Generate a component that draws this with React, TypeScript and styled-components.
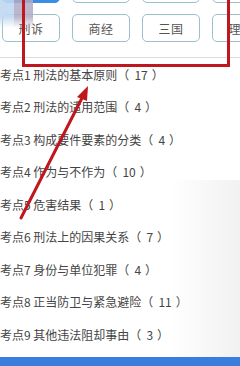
import React from "react";
import styled, { createGlobalStyle } from "styled-components";

const Global = createGlobalStyle`
  html, body { margin: 0; padding: 0; background: #fff; }
  body { font-family: "Noto Sans CJK SC", "Noto Sans", sans-serif; }
`;

const Page = styled.div`
  position: relative;
  width: 240px;
  height: 366px;
  overflow: hidden;
  display: flex;
  flex-direction: column;
  background: #fff;
`;

const TabGrid = styled.div`
  display: grid;
  grid-template-columns: repeat(4, 58px);
  grid-auto-rows: 28px;
  column-gap: 12px;
  row-gap: 11px;
  margin-top: -25px;
  padding-left: 2px;
`;

const Tab = styled.div<{ $active?: boolean }>`
  box-sizing: border-box;
  display: flex;
  align-items: center;
  justify-content: center;
  border-radius: 5px;
  border: 1px solid ${(p) => (p.$active ? "#3a8ee6" : "#9cc0cc")};
  background: ${(p) => (p.$active ? "#3a8ee6" : "#fff")};
  color: ${(p) => (p.$active ? "#fff" : "#555")};
  font-size: 12px;
  letter-spacing: 0.5px;
`;

const Divider = styled.div`
  margin-top: 15px;
  height: 1px;
  background: #dcdcdc;
`;

const List = styled.div`
  display: flex;
  flex-direction: column;
`;

const Item = styled.div`
  height: 32.5px;
  display: flex;
  align-items: center;
  font-size: 12px;
  color: #444;
  white-space: nowrap;
`;

const Num = styled.span`
  padding: 0 4px 0 5px;
`;

const Footer = styled.div`
  margin-top: auto;
  height: 9px;
  background: #3b7ddd;
`;

const TouchGlow = styled.div`
  position: absolute;
  left: 0;
  top: 0;
  width: 33px;
  height: 28px;
  background: linear-gradient(
    90deg,
    rgba(190, 216, 240, 0.9) 0,
    rgba(190, 216, 240, 0.9) 14px,
    rgba(176, 170, 196, 0.85) 14px,
    rgba(176, 170, 196, 0.85) 33px
  );
  -webkit-mask-image: linear-gradient(180deg, #000 60%, transparent 100%);
  mask-image: linear-gradient(180deg, #000 60%, transparent 100%);
`;

const RightShade = styled.div`
  position: absolute;
  right: 0;
  top: 180px;
  width: 70px;
  height: 177px;
  background: linear-gradient(90deg, rgba(235, 235, 235, 0) 0, rgba(232, 232, 232, 0.6) 100%);
  pointer-events: none;
`;

const Annotation = styled.svg`
  position: absolute;
  left: 0;
  top: 0;
  pointer-events: none;
`;

const topTabs = [{ active: true }, {}, {}, {}];
const tabs = ["刑诉", "商经", "三国", "理论"];

const items: [string, number][] = [
  ["考点1 刑法的基本原则", 17],
  ["考点2 刑法的适用范围", 4],
  ["考点3 构成要件要素的分类", 4],
  ["考点4 作为与不作为", 10],
  ["考点5 危害结果", 1],
  ["考点6 刑法上的因果关系", 7],
  ["考点7 身份与单位犯罪", 4],
  ["考点8 正当防卫与紧急避险", 11],
  ["考点9 其他违法阻却事由", 3],
];

export default function App() {
  return (
    <>
      <Global />
      <Page>
        <TabGrid>
          {topTabs.map((t, i) => (
            <Tab key={"t" + i} $active={(t as { active?: boolean }).active} />
          ))}
          {tabs.map((t) => (
            <Tab key={t}>{t}</Tab>
          ))}
        </TabGrid>
        <Divider />
        <List>
          {items.map(([t, n]) => (
            <Item key={t}>
              {t}（<Num>{n}</Num>）
            </Item>
          ))}
        </List>
        <Footer />
        <RightShade />
        <TouchGlow />
        <Annotation width="240" height="366" viewBox="0 0 240 366">
          <rect x="23.5" y="-5" width="205" height="70.5" fill="none" stroke="#c0161e" strokeWidth="3" />
          <line x1="21" y1="218" x2="82" y2="98" stroke="#c0161e" strokeWidth="3" strokeLinecap="round" />
          <polygon points="88,86 77,97 87,101" fill="#c0161e" />
        </Annotation>
      </Page>
    </>
  );
}
